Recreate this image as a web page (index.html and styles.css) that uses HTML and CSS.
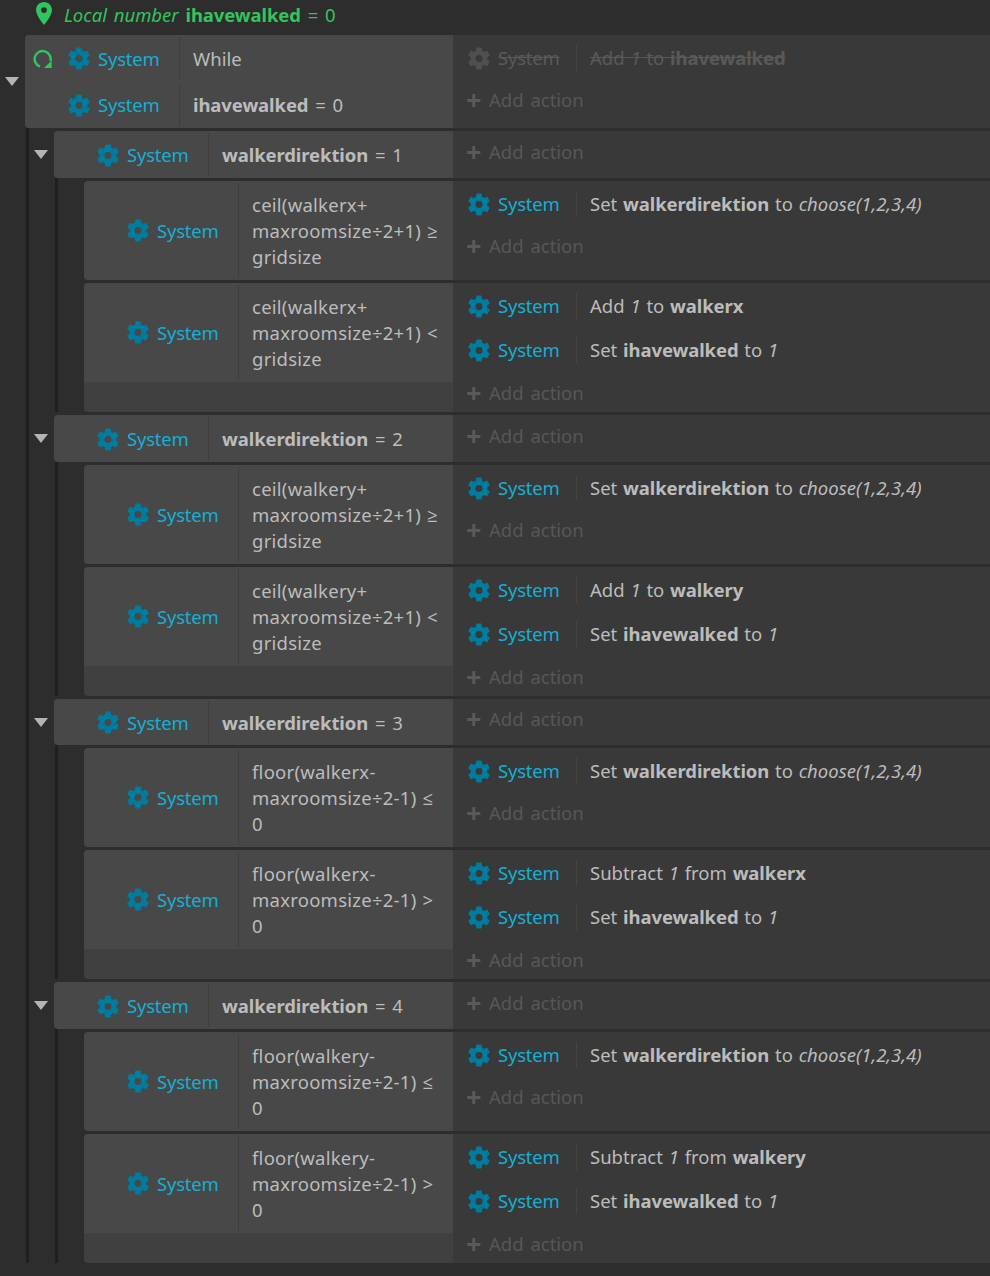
FILE: index.html
```html
<!DOCTYPE html>
<html lang="en">
<head>
    <meta charset="UTF-8">
    <title>Event sheet</title>
    <link rel="stylesheet" href="styles.css">
</head>
<body>
    <svg class="defs" width="0" height="0">
        <symbol id="gear" viewBox="2.7 2 18.6 20">
            <path fill-rule="evenodd" d="M19.14 12.94c.04-.3.06-.61.06-.94 0-.32-.02-.64-.07-.94l2.03-1.58c.18-.14.23-.41.12-.61l-1.92-3.32c-.12-.22-.37-.29-.59-.22l-2.39.96c-.5-.38-1.03-.7-1.62-.94l-.36-2.54c-.04-.24-.24-.41-.48-.41h-3.84c-.24 0-.43.17-.47.41l-.36 2.54c-.59.24-1.13.57-1.62.94l-2.39-.96c-.22-.08-.47 0-.59.22L2.74 8.87c-.12.21-.08.47.12.61l2.03 1.58c-.05.3-.09.63-.09.94s.02.64.07.94l-2.03 1.58c-.18.14-.23.41-.12.61l1.92 3.32c.12.22.37.29.59.22l2.39-.96c.5.38 1.03.7 1.62.94l.36 2.54c.05.24.24.41.48.41h3.84c.24 0 .44-.17.47-.41l.36-2.54c.59-.24 1.13-.56 1.62-.94l2.39.96c.22.08.47 0 .59-.22l1.92-3.32c.12-.22.07-.47-.12-.61l-2.01-1.58zM12 15a3 3 0 1 1 0-6 3 3 0 0 1 0 6z"/>
        </symbol>
    </svg>

    <div class="var-line">
        <svg class="pin" viewBox="5 2 14 20"><path d="M12 2C8.13 2 5 5.13 5 9c0 5.25 7 13 7 13s7-7.75 7-13c0-3.87-3.13-7-7-7zm0 9.5a2.5 2.5 0 1 1 0-5 2.5 2.5 0 0 1 0 5z"/></svg>
        <span><i>Local number</i> <b>ihavewalked</b> = 0</span>
    </div>

    <div class="event">
        <div class="toggle"><span class="arrow"></span></div>
        <div class="cond lv0">
            <div class="cond-row">
                <div class="obj"><span class="slot"><svg class="loop" viewBox="0 0 20 20"><path d="M7 17.6A8 8 0 1 1 17.4 12"/><path class="loop-tip" d="M11 19h7.7v-7.4z"/></svg></span><svg class="gear"><use href="#gear"/></svg>System</div>
                <div class="txt">While</div>
            </div>
            <div class="cond-row">
                <div class="obj"><span class="slot"></span><svg class="gear"><use href="#gear"/></svg>System</div>
                <div class="txt"><b>ihavewalked</b> = 0</div>
            </div>
        </div>
        <div class="actions">
            <div class="action off">
                <div class="obj"><svg class="gear"><use href="#gear"/></svg>System</div>
                <div class="txt">Add <i>1</i> to <b>ihavewalked</b></div>
            </div>
            <div class="add">Add action</div>
        </div>
    </div>

    <div class="children">

        <div class="event">
            <div class="toggle"><span class="arrow"></span></div>
            <div class="cond lv1">
                <div class="cond-row tall">
                    <div class="obj"><span class="slot"></span><svg class="gear"><use href="#gear"/></svg>System</div>
                    <div class="txt"><b>walkerdirektion</b> = 1</div>
                </div>
            </div>
            <div class="actions"><div class="add">Add action</div></div>
        </div>
        <div class="children inner">
            <div class="event">
                <div class="cond lv2">
                    <div class="cond-row">
                        <div class="obj"><span class="slot"></span><svg class="gear"><use href="#gear"/></svg>System</div>
                        <div class="txt">ceil(walkerx+<br>maxroomsize÷2+1) ≥<br>gridsize</div>
                    </div>
                </div>
                <div class="actions">
                    <div class="action">
                        <div class="obj"><svg class="gear"><use href="#gear"/></svg>System</div>
                        <div class="txt">Set <b>walkerdirektion</b> to <i>choose(1,2,3,4)</i></div>
                    </div>
                    <div class="add">Add action</div>
                </div>
            </div>
            <div class="event">
                <div class="cond lv2">
                    <div class="cond-row">
                        <div class="obj"><span class="slot"></span><svg class="gear"><use href="#gear"/></svg>System</div>
                        <div class="txt">ceil(walkerx+<br>maxroomsize÷2+1) &lt;<br>gridsize</div>
                    </div>
                </div>
                <div class="actions">
                    <div class="action">
                        <div class="obj"><svg class="gear"><use href="#gear"/></svg>System</div>
                        <div class="txt">Add <i>1</i> to <b>walkerx</b></div>
                    </div>
                    <div class="action">
                        <div class="obj"><svg class="gear"><use href="#gear"/></svg>System</div>
                        <div class="txt">Set <b>ihavewalked</b> to <i>1</i></div>
                    </div>
                    <div class="add">Add action</div>
                </div>
            </div>
        </div>

        <div class="event">
            <div class="toggle"><span class="arrow"></span></div>
            <div class="cond lv1">
                <div class="cond-row tall">
                    <div class="obj"><span class="slot"></span><svg class="gear"><use href="#gear"/></svg>System</div>
                    <div class="txt"><b>walkerdirektion</b> = 2</div>
                </div>
            </div>
            <div class="actions"><div class="add">Add action</div></div>
        </div>
        <div class="children inner">
            <div class="event">
                <div class="cond lv2">
                    <div class="cond-row">
                        <div class="obj"><span class="slot"></span><svg class="gear"><use href="#gear"/></svg>System</div>
                        <div class="txt">ceil(walkery+<br>maxroomsize÷2+1) ≥<br>gridsize</div>
                    </div>
                </div>
                <div class="actions">
                    <div class="action">
                        <div class="obj"><svg class="gear"><use href="#gear"/></svg>System</div>
                        <div class="txt">Set <b>walkerdirektion</b> to <i>choose(1,2,3,4)</i></div>
                    </div>
                    <div class="add">Add action</div>
                </div>
            </div>
            <div class="event">
                <div class="cond lv2">
                    <div class="cond-row">
                        <div class="obj"><span class="slot"></span><svg class="gear"><use href="#gear"/></svg>System</div>
                        <div class="txt">ceil(walkery+<br>maxroomsize÷2+1) &lt;<br>gridsize</div>
                    </div>
                </div>
                <div class="actions">
                    <div class="action">
                        <div class="obj"><svg class="gear"><use href="#gear"/></svg>System</div>
                        <div class="txt">Add <i>1</i> to <b>walkery</b></div>
                    </div>
                    <div class="action">
                        <div class="obj"><svg class="gear"><use href="#gear"/></svg>System</div>
                        <div class="txt">Set <b>ihavewalked</b> to <i>1</i></div>
                    </div>
                    <div class="add">Add action</div>
                </div>
            </div>
        </div>

        <div class="event short">
            <div class="toggle"><span class="arrow"></span></div>
            <div class="cond lv1">
                <div class="cond-row tall">
                    <div class="obj"><span class="slot"></span><svg class="gear"><use href="#gear"/></svg>System</div>
                    <div class="txt"><b>walkerdirektion</b> = 3</div>
                </div>
            </div>
            <div class="actions"><div class="add">Add action</div></div>
        </div>
        <div class="children inner">
            <div class="event">
                <div class="cond lv2">
                    <div class="cond-row">
                        <div class="obj"><span class="slot"></span><svg class="gear"><use href="#gear"/></svg>System</div>
                        <div class="txt">floor(walkerx-<br>maxroomsize÷2-1) ≤<br>0</div>
                    </div>
                </div>
                <div class="actions">
                    <div class="action">
                        <div class="obj"><svg class="gear"><use href="#gear"/></svg>System</div>
                        <div class="txt">Set <b>walkerdirektion</b> to <i>choose(1,2,3,4)</i></div>
                    </div>
                    <div class="add">Add action</div>
                </div>
            </div>
            <div class="event">
                <div class="cond lv2">
                    <div class="cond-row">
                        <div class="obj"><span class="slot"></span><svg class="gear"><use href="#gear"/></svg>System</div>
                        <div class="txt">floor(walkerx-<br>maxroomsize÷2-1) &gt;<br>0</div>
                    </div>
                </div>
                <div class="actions">
                    <div class="action">
                        <div class="obj"><svg class="gear"><use href="#gear"/></svg>System</div>
                        <div class="txt">Subtract <i>1</i> from <b>walkerx</b></div>
                    </div>
                    <div class="action">
                        <div class="obj"><svg class="gear"><use href="#gear"/></svg>System</div>
                        <div class="txt">Set <b>ihavewalked</b> to <i>1</i></div>
                    </div>
                    <div class="add">Add action</div>
                </div>
            </div>
        </div>

        <div class="event">
            <div class="toggle"><span class="arrow"></span></div>
            <div class="cond lv1">
                <div class="cond-row tall">
                    <div class="obj"><span class="slot"></span><svg class="gear"><use href="#gear"/></svg>System</div>
                    <div class="txt"><b>walkerdirektion</b> = 4</div>
                </div>
            </div>
            <div class="actions"><div class="add">Add action</div></div>
        </div>
        <div class="children inner">
            <div class="event">
                <div class="cond lv2">
                    <div class="cond-row">
                        <div class="obj"><span class="slot"></span><svg class="gear"><use href="#gear"/></svg>System</div>
                        <div class="txt">floor(walkery-<br>maxroomsize÷2-1) ≤<br>0</div>
                    </div>
                </div>
                <div class="actions">
                    <div class="action">
                        <div class="obj"><svg class="gear"><use href="#gear"/></svg>System</div>
                        <div class="txt">Set <b>walkerdirektion</b> to <i>choose(1,2,3,4)</i></div>
                    </div>
                    <div class="add">Add action</div>
                </div>
            </div>
            <div class="event">
                <div class="cond lv2">
                    <div class="cond-row">
                        <div class="obj"><span class="slot"></span><svg class="gear"><use href="#gear"/></svg>System</div>
                        <div class="txt">floor(walkery-<br>maxroomsize÷2-1) &gt;<br>0</div>
                    </div>
                </div>
                <div class="actions">
                    <div class="action">
                        <div class="obj"><svg class="gear"><use href="#gear"/></svg>System</div>
                        <div class="txt">Subtract <i>1</i> from <b>walkery</b></div>
                    </div>
                    <div class="action">
                        <div class="obj"><svg class="gear"><use href="#gear"/></svg>System</div>
                        <div class="txt">Set <b>ihavewalked</b> to <i>1</i></div>
                    </div>
                    <div class="add">Add action</div>
                </div>
            </div>
        </div>

    </div>
</body>
</html>
```

FILE: styles.css
```css
html, body {
    margin: 0;
    background-color: #2d2d2d;
}
body {
    font-family: "Noto Sans", "Open Sans", sans-serif;
    font-size: 18.5px;
    line-height: 26px;
    word-spacing: 1px;
    color: #bcbcbc;
    height: 1276px;
    overflow: hidden;
}
b {
    letter-spacing: -0.1px;
}
.defs {
    display: block;
    height: 0;
}
.var-line {
    height: 35px;
    display: flex;
    align-items: flex-start;
    gap: 12px;
    padding-left: 36px;
    box-sizing: border-box;
    color: #32c45e;
    white-space: nowrap;
    word-spacing: 2px;
}
.var-line span {
    margin-top: 2px;
}
.pin {
    width: 16px;
    height: 23px;
    margin-top: 2px;
    fill: #32c45e;
}
.event {
    display: flex;
    margin-bottom: 3px;
}
.toggle {
    width: 25px;
    flex: none;
    display: flex;
    align-items: center;
    justify-content: center;
}
.arrow {
    width: 0;
    height: 0;
    border-left: 7px solid transparent;
    border-right: 7px solid transparent;
    border-top: 9px solid #b4b4b4;
    margin-left: -2px;
}
.children {
    margin-left: 26px;
    border-left: 3px solid #1f1f1f;
    margin-top: -3px;
    padding-top: 3px;
}
.children.inner {
    padding-left: 26px;
    margin-bottom: 3px;
}
.children .event:last-child {
    margin-bottom: 0;
}
.children > .children.inner:last-child {
    margin-bottom: 0;
}
.cond {
    flex: none;
    background-color: #404040;
    border-radius: 4px 0 0 4px;
    overflow: hidden;
}
.lv0 { width: 428px; }
.lv1 { width: 399px; }
.lv2 { width: 369px; }
.cond-row {
    display: flex;
    background-color: #484848;
    min-height: 46px;
}
.cond-row + .cond-row {
    min-height: 47px;
}
.cond-row.tall {
    min-height: 47px;
}
.short .cond-row.tall {
    min-height: 46px;
}
.obj {
    display: flex;
    align-items: center;
    gap: 8px;
    color: #12b0d4;
    letter-spacing: -0.2px;
    flex: none;
    width: 155px;
    box-sizing: border-box;
    margin: 2px 0;
    border-right: 1px solid #3e3e3e;
}
.slot {
    width: 35px;
    flex: none;
    padding-left: 8px;
    box-sizing: border-box;
    display: flex;
}
.gear {
    width: 22px;
    height: 23px;
    fill: #007c9e;
    flex: none;
}
.loop {
    width: 20px;
    height: 20px;
    fill: none;
    stroke: #32c45e;
    stroke-width: 2.4;
}
.loop-tip {
    fill: #32c45e;
    stroke: none;
}
.txt {
    padding: 10px 0 9px 13px;
    white-space: nowrap;
    align-self: center;
}
.lv0 .txt, .lv1 .txt {
    word-spacing: 2px;
}
.lv0 .obj, .lv1 .obj {
    padding-top: 1px;
}
.lv2 .txt {
    padding: 11px 0 10px 13px;
    letter-spacing: 0.25px;
}
.actions {
    flex: 1;
    background-color: #393939;
    padding-top: 1px;
    min-width: 0;
}
.short .actions {
    padding-top: 0;
}
.action {
    display: flex;
    height: 44px;
    align-items: center;
    padding-left: 15px;
}
.action .obj {
    width: 109px;
    border-right-color: #444444;
}
.action .txt {
    padding: 0 0 0 13px;
}
.action.off, .action.off .obj {
    color: #595959;
}
.action.off .gear {
    fill: #4f4f4f;
}
.action.off .obj, .action.off .txt {
    text-decoration: line-through;
}
.add {
    height: 40px;
    box-sizing: border-box;
    display: flex;
    align-items: center;
    padding-left: 13px;
    color: #575757;
    word-spacing: 2px;
}
.action + .action + .add {
    padding-top: 2px;
}
.add::before {
    content: "+";
    font-weight: bold;
    font-size: 27px;
    width: 23px;
    color: #5a5a5a;
}
```
